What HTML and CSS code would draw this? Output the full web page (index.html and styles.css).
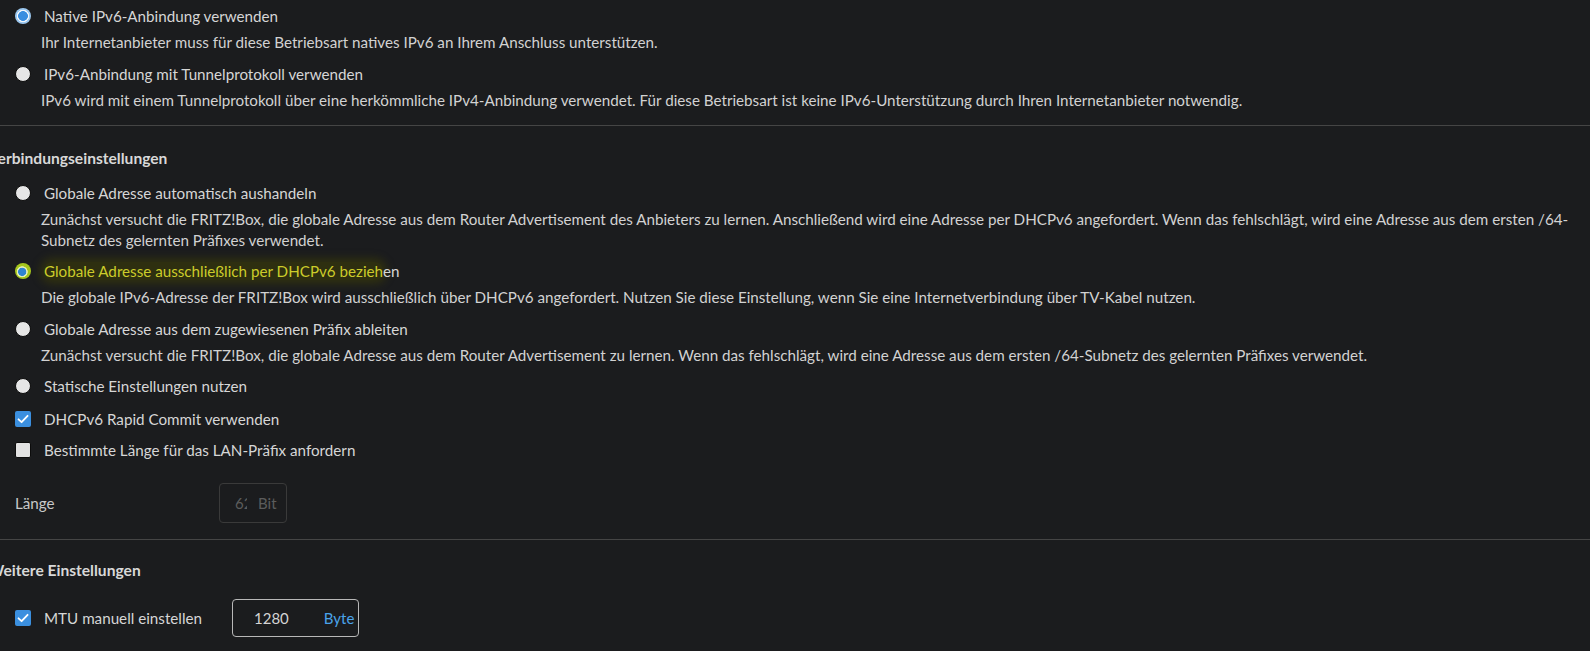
FILE: index.html
```html
<!DOCTYPE html>
<html lang="de">
<head>
<meta charset="utf-8">
<title>IPv6</title>
<link rel="stylesheet" href="styles.css">
</head>
<body>
<div class="page">
  <section class="group group-top">
    <div class="option">
      <div class="opt-row"><span class="radio checked"></span><span class="label">Native IPv6-Anbindung verwenden</span></div>
      <p class="desc">Ihr Internetanbieter muss für diese Betriebsart natives IPv6 an Ihrem Anschluss unterstützen.</p>
    </div>
    <div class="option">
      <div class="opt-row"><span class="radio"></span><span class="label">IPv6-Anbindung mit Tunnelprotokoll verwenden</span></div>
      <p class="desc">IPv6 wird mit einem Tunnelprotokoll über eine herkömmliche IPv4-Anbindung verwendet. Für diese Betriebsart ist keine IPv6-Unterstützung durch Ihren Internetanbieter notwendig.</p>
    </div>
  </section>
  <hr class="divider">
  <section class="group">
    <h3 class="heading">Verbindungseinstellungen</h3>
    <div class="option">
      <div class="opt-row"><span class="radio"></span><span class="label">Globale Adresse automatisch aushandeln</span></div>
      <p class="desc">Zunächst versucht die FRITZ!Box, die globale Adresse aus dem Router Advertisement des Anbieters zu lernen. Anschließend wird eine Adresse per DHCPv6 angefordert. Wenn das fehlschlägt, wird eine Adresse aus dem ersten /64-Subnetz des gelernten Präfixes verwendet.</p>
    </div>
    <div class="option">
      <div class="opt-row"><span class="radio focused"></span><span class="label"><span class="hl">Globale Adresse ausschließlich per DHCPv6 bezieh</span>en</span></div>
      <p class="desc">Die globale IPv6-Adresse der FRITZ!Box wird ausschließlich über DHCPv6 angefordert. Nutzen Sie diese Einstellung, wenn Sie eine Internetverbindung über TV-Kabel nutzen.</p>
    </div>
    <div class="option">
      <div class="opt-row"><span class="radio"></span><span class="label">Globale Adresse aus dem zugewiesenen Präfix ableiten</span></div>
      <p class="desc">Zunächst versucht die FRITZ!Box, die globale Adresse aus dem Router Advertisement zu lernen. Wenn das fehlschlägt, wird eine Adresse aus dem ersten /64-Subnetz des gelernten Präfixes verwendet.</p>
    </div>
    <div class="option option-loose">
      <div class="opt-row"><span class="radio"></span><span class="label">Statische Einstellungen nutzen</span></div>
    </div>
    <div class="option option-tight">
      <div class="opt-row"><span class="checkbox checked"><svg viewBox="0 0 16 16" width="16" height="16"><path d="M3.5 8.3 L6.6 11.2 L12.6 4.8" fill="none" stroke="#fff" stroke-width="1.8" stroke-linecap="round" stroke-linejoin="round"/></svg></span><span class="label">DHCPv6 Rapid Commit verwenden</span></div>
    </div>
    <div class="option">
      <div class="opt-row"><span class="checkbox"></span><span class="label">Bestimmte Länge für das LAN-Präfix anfordern</span></div>
    </div>
    <div class="field-row field-len">
      <span class="field-label">Länge</span>
      <div class="input disabled"><span class="val">62</span><span class="unit">Bit</span></div>
    </div>
  </section>
  <hr class="divider">
  <section class="group">
    <h3 class="heading heading-second">Weitere Einstellungen</h3>
    <div class="field-row field-mtu">
      <div class="opt-row mtu-check"><span class="checkbox checked"><svg viewBox="0 0 16 16" width="16" height="16"><path d="M3.5 8.3 L6.6 11.2 L12.6 4.8" fill="none" stroke="#fff" stroke-width="1.8" stroke-linecap="round" stroke-linejoin="round"/></svg></span><span class="label">MTU manuell einstellen</span></div>
      <div class="input active"><span class="val">1280</span><span class="unit">Byte</span></div>
    </div>
  </section>
</div>
</body>
</html>
```
FILE: styles.css
```css
html, body {
  margin: 0;
  padding: 0;
  background: #1b1c1e;
  overflow: hidden;
}
body {
  font-family: Lato, "Open Sans", sans-serif;
  color: #d4d4d4;
  width: 1590px;
  height: 651px;
}
.page {
  padding-top: 5px;
}
.group {
  padding: 0 10px 0 15px;
  display: flex;
  flex-direction: column;
}
.option {
  display: flex;
  flex-direction: column;
  margin-bottom: 10px;
}
.option-loose { margin-bottom: 11px; }
.option-tight { margin-bottom: 9px; }
.group-top .option:last-child { margin-bottom: 15px; }
.opt-row {
  display: flex;
  align-items: center;
  height: 22px;
}
.label {
  font-size: 15.2px;
  line-height: 22px;
  margin-left: 13px;
  color: #d6d6d6;
}
.desc {
  margin: 5px 0 0 26px;
  font-size: 15.2px;
  line-height: 20.5px;
  color: #d2d2d2;
}
.radio {
  width: 16px;
  height: 16px;
  border-radius: 50%;
  box-sizing: border-box;
  background: #e6e6e6;
  border: 1px solid #0c0c0c;
  flex: none;
}
.radio.checked {
  border: none;
  background: radial-gradient(circle, #3a8ee0 0 4.6px, #f2f6fb 5.2px 5.9px, #9cc8f0 6.4px 8px);
}
.radio.focused {
  border: none;
  background: radial-gradient(circle at 45% 55%, #2f84d0 0 3.8px, #e4efb8 4.4px 5.2px, #a6c61c 5.8px 8px);
}
.hl {
  color: #cccc2a;
  background: rgba(70, 70, 0, 0.45);
  box-shadow: 0 0 8px 4px rgba(70, 70, 0, 0.45);
  border-radius: 8px;
}
.checkbox {
  width: 16px;
  height: 16px;
  box-sizing: border-box;
  background: #e2e2e2;
  border: 1px solid #0c0c0c;
  border-radius: 2px;
  flex: none;
  display: flex;
}
.checkbox.checked {
  background: #3b8fdf;
  border: none;
}
.divider {
  border: none;
  border-top: 1px solid #454545;
  margin: 0;
  height: 0;
}
.heading {
  font-size: 15.6px;
  font-weight: bold;
  line-height: 20px;
  margin: 22px 0 14px -27px;
  color: #d8d8d8;
}
.heading-second {
  margin-top: 20px;
}
.field-row {
  display: flex;
  align-items: center;
}
.field-len {
  margin-top: 12px;
  margin-bottom: 16px;
}
.field-label {
  width: 204px;
  font-size: 15.2px;
  color: #c8c8c8;
}
.input {
  box-sizing: border-box;
  border-radius: 4px;
  display: flex;
  align-items: center;
  font-size: 15px;
}
.input.disabled {
  width: 68px;
  height: 40px;
  border: 1px solid #3a3a3a;
  color: #5c5c5c;
  padding-left: 15px;
}
.input.disabled .val {
  width: 12px;
  flex: none;
  overflow: hidden;
  white-space: nowrap;
}
.input.disabled .unit {
  margin-left: 11px;
}
.field-mtu {
  margin-top: 5px;
}
.mtu-check {
  width: 217px;
}
.input.active {
  width: 127px;
  height: 38px;
  border: 1px solid #b8b8b8;
  color: #d4d4d4;
  padding-left: 21px;
}
.input.active .unit {
  margin-left: 35px;
  color: #4aa3ea;
}
```
